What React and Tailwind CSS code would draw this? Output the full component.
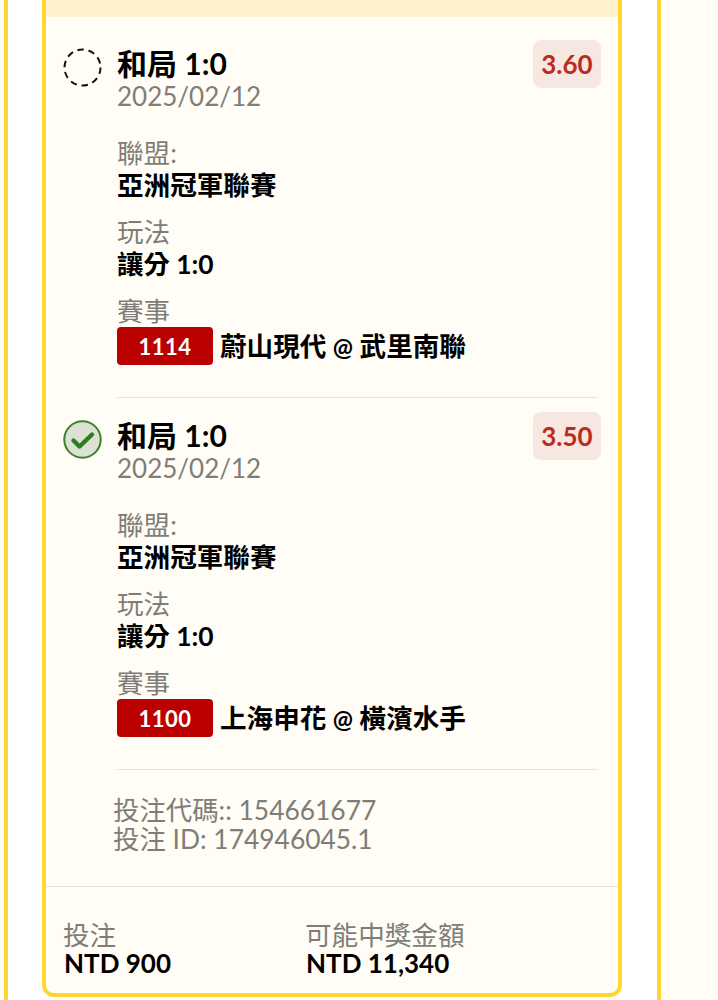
const FONT = "font-['Lato','Noto_Sans_CJK_TC',sans-serif]";

function DashedCircle() {
  return (
    <svg width="40" height="40" viewBox="0 0 40 40" fill="none">
      <circle cx="19.5" cy="19.5" r="18" stroke="#111" strokeWidth="2" strokeDasharray="6.5 4.8" />
    </svg>
  );
}

function CheckCircle() {
  return (
    <svg width="40" height="40" viewBox="0 0 40 40" fill="none">
      <circle cx="19.5" cy="19.5" r="18.2" fill="#dbe2d3" stroke="#3c7f2c" strokeWidth="2" />
      <path d="M10.5 20.5l6 6 12.5-12" stroke="#2f7d1f" strokeWidth="4.4" strokeLinecap="round" strokeLinejoin="round" />
    </svg>
  );
}

function Field({ label, children }) {
  return (
    <div className="mt-[15px]">
      <div className="text-[26.6px] leading-8 text-[#807d78]">{label}</div>
      {children}
    </div>
  );
}

function Selection({ icon, odds, code, home, away }) {
  return (
    <div>
      <div className="flex items-start">
        <div className="w-[54px] pt-[8px] shrink-0">{icon}</div>
        <div className="flex-1 pt-2">
          <div className="text-[30px] leading-[30px] font-bold text-black mb-[2px]">和局 1:0</div>
          <div className="text-[26px] leading-8 text-[#807d78]">2025/02/12</div>
        </div>
        <div className="h-12 w-[68px] mr-[-4px] rounded-lg bg-[#f6e8e1] flex items-center justify-center text-[26px] font-bold text-[#bd2a22]">
          {odds}
        </div>
      </div>
      <div className="ml-[54px] mt-[25px] border-b border-[#e6e3dc] pb-[32px]">
        <div className="text-[26.6px] leading-8 text-[#807d78]">聯盟:</div>
        <div className="text-[26.6px] leading-8 font-bold text-black">亞洲冠軍聯賽</div>
        <Field label="玩法">
          <div className="text-[26.4px] leading-8 font-bold text-black">讓分 1:0</div>
        </Field>
        <Field label="賽事">
          <div className="flex items-center">
            <span className="w-24 h-[38px] rounded bg-[#bb0000] text-white text-[22px] font-bold tracking-[0.5px] flex items-center justify-center">
              {code}
            </span>
            <span className="ml-[7px] text-[26.6px] leading-8 font-bold text-black">
              {home} <span className="text-[24px]">@</span> {away}
            </span>
          </div>
        </Field>
      </div>
    </div>
  );
}

export default function App() {
  return (
    <div className={`${FONT} h-[1000px] overflow-hidden bg-white flex`}>
      <div className="w-2 shrink-0 bg-[#fffdf5] border-r-4 border-[#ffd633]" />
      <div className="w-[580px] h-[997px] ml-[34px] shrink-0 bg-[#fffdf5] border-4 border-t-0 border-[#ffd633] rounded-b-xl flex flex-col overflow-hidden">
        <div className="h-[17px] bg-[#fff2cc] shrink-0" />
        <div className="px-[17px] pt-[23px] flex-1">
          <div className="pr-[4px]">
            <Selection icon={<DashedCircle />} odds="3.60" code="1114" home="蔚山現代" away="武里南聯" />
            <div className="mt-[14px]">
              <Selection icon={<CheckCircle />} odds="3.50" code="1100" home="上海申花" away="橫濱水手" />
            </div>
          </div>
          <div className="ml-[50px] mt-[26px] text-[26.4px] leading-[29px] text-[#807d78]">
            <div>投注代碼:: 154661677</div>
            <div>投注 ID: 174946045.1</div>
          </div>
        </div>
        <div className="border-t border-[#e6e3dc] h-[107px] shrink-0 px-[17px] pt-[34px] flex">
          <div className="w-[242px]">
            <div className="text-[26.6px] leading-7 text-[#807d78]">投注</div>
            <div className="ml-[1px] text-[26px] leading-7 font-bold text-black">NTD 900</div>
          </div>
          <div>
            <div className="text-[26.6px] leading-7 text-[#807d78]">可能中獎金額</div>
            <div className="ml-[1px] text-[26px] leading-7 font-bold text-black">NTD 11,340</div>
          </div>
        </div>
      </div>
      <div className="ml-[35px] flex-1 bg-[#fffdf5] border-l-4 border-[#ffd633]" />
    </div>
  );
}
